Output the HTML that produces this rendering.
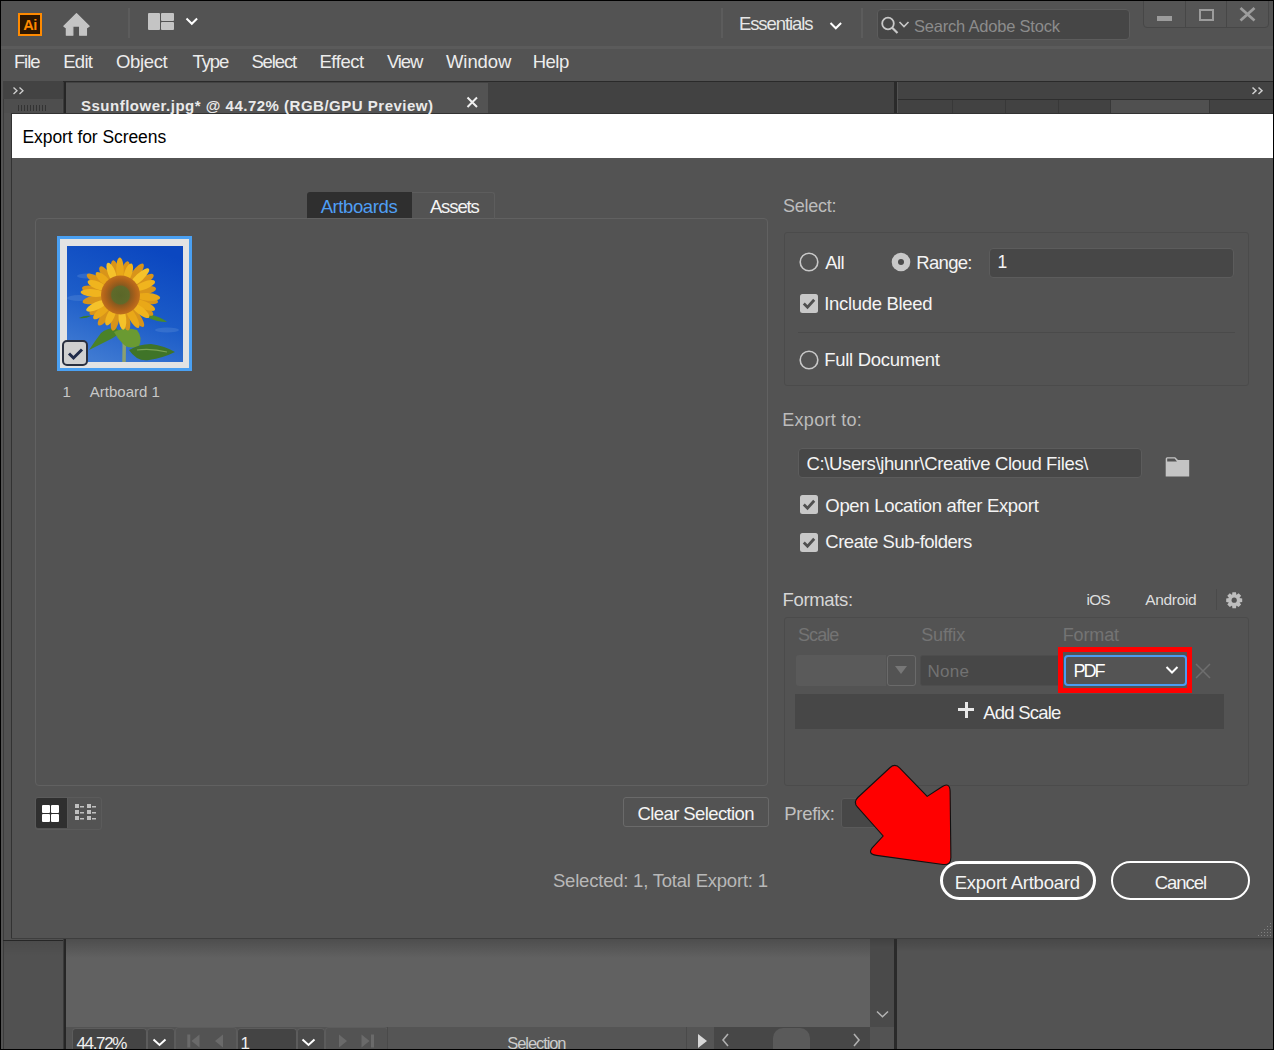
<!DOCTYPE html>
<html><head><meta charset="utf-8"><style>
html,body{margin:0;padding:0;width:1274px;height:1050px;overflow:hidden;background:#000;}
.r{position:absolute;box-sizing:content-box;}
.t{position:absolute;white-space:nowrap;font-family:"Liberation Sans",sans-serif;}
svg.r{overflow:visible}
</style></head><body>
<div class="r" style="left:1px;top:1px;width:1272px;height:1048px;background:#535353;"></div>
<div class="r" style="left:1px;top:46px;width:1272px;height:3px;background:#5b5b5b;"></div>
<div class="r" style="left:18px;top:13px;width:20px;height:19px;background:#2d1600;border:2px solid #ff8a00;"></div>
<svg class="r" style="left:18px;top:13px" width="24" height="23" viewBox="0 0 24 23"><text x="5.3" y="16.8" font-family="Liberation Sans" font-weight="700" font-size="14.5" fill="#ff8a00" letter-spacing="-0.6">Ai</text></svg>
<svg class="r" style="left:60px;top:10.5px" width="32" height="28"><path d="M16.5 2.7 L3.9 15.1 L6.4 16.9 L6.4 24.2 L12.8 24.2 L12.8 15.0 L19.7 15.0 L19.7 24.2 L26.4 24.2 L26.4 16.9 L29.1 15.1 Z" fill="#c4c4c4" stroke="#c4c4c4" stroke-width="1.3" stroke-linejoin="round"/></svg>
<div class="r" style="left:128px;top:8px;width:2px;height:30px;background:#5c5c5c;"></div>
<div class="r" style="left:148px;top:13px;width:12px;height:17px;background:#c4c4c4;border-radius:1px"></div>
<div class="r" style="left:161px;top:13px;width:13px;height:8px;background:#c4c4c4;border-radius:1px"></div>
<div class="r" style="left:161px;top:22px;width:13px;height:8px;background:#c4c4c4;border-radius:1px"></div>
<svg class="r" style="left:184px;top:16px" width="16" height="11"><path d="M2.5 2.5 L7.8 7.8 L13.1 2.5" fill="none" stroke="#ffffff" stroke-width="2"/></svg>
<div class="r" style="left:721px;top:8px;width:2px;height:30px;background:#5c5c5c;"></div>
<svg class="r" style="left:828px;top:20px" width="16" height="12"><path d="M2.5 3 L7.8 8.3 L13.1 3" fill="none" stroke="#ffffff" stroke-width="2"/></svg>
<div class="r" style="left:861px;top:8px;width:2px;height:30px;background:#5c5c5c;"></div>
<div class="r" style="left:877px;top:9px;width:251px;height:29px;background:#464646;border:1px solid #5c5c5c;border-radius:4px"></div>
<svg class="r" style="left:878px;top:14px" width="36" height="22"><circle cx="10" cy="9.5" r="5.8" fill="none" stroke="#c8c8c8" stroke-width="1.8"/><path d="M14.2 13.7 L19.5 19" stroke="#c8c8c8" stroke-width="2.2"/><path d="M21.5 8 L26 12.5 L30.5 8" fill="none" stroke="#c8c8c8" stroke-width="1.6"/></svg>
<div class="r" style="left:1143px;top:-4px;width:124px;height:30px;border:1px solid #474747;border-radius:0 0 4px 4px;background:#555555"></div>
<div class="r" style="left:1185px;top:0px;width:1px;height:27px;background:#474747;"></div>
<div class="r" style="left:1226px;top:0px;width:1px;height:27px;background:#474747;"></div>
<div class="r" style="left:1157px;top:16px;width:15px;height:5px;background:#9c9c9c;"></div>
<div class="r" style="left:1199px;top:9px;width:11px;height:8px;border:2.5px solid #9c9c9c"></div>
<svg class="r" style="left:1239px;top:7px" width="18" height="15"><path d="M1.5 1 L15.5 13.5 M15.5 1 L1.5 13.5" stroke="#9c9c9c" stroke-width="2.8"/></svg>
<div class="r" style="left:63px;top:81px;width:1210px;height:1px;background:#2a2a2a;"></div>
<div class="r" style="left:3px;top:82px;width:60px;height:967px;background:#515151;"></div>
<div class="r" style="left:3px;top:99px;width:1px;height:950px;background:#3c3c3c;"></div>
<div class="r" style="left:4px;top:941px;width:59px;height:15px;background:linear-gradient(rgba(0,0,0,0.08),rgba(0,0,0,0));"></div>
<div class="r" style="left:3px;top:81px;width:60px;height:18px;background:#434343;"></div>
<svg class="r" style="left:12px;top:86px" width="14" height="10"><path d="M1.5 1.5 L5 4.8 L1.5 8 M7.5 1.5 L11 4.8 L7.5 8" fill="none" stroke="#cfcfcf" stroke-width="1.3"/></svg>
<div class="r" style="left:4px;top:99px;width:58px;height:14px;background:#4e4e4e;"></div>
<div class="r" style="left:18px;top:105px;width:1px;height:6px;background:#333333;"></div>
<div class="r" style="left:21px;top:105px;width:1px;height:6px;background:#333333;"></div>
<div class="r" style="left:24px;top:105px;width:1px;height:6px;background:#333333;"></div>
<div class="r" style="left:27px;top:105px;width:1px;height:6px;background:#333333;"></div>
<div class="r" style="left:30px;top:105px;width:1px;height:6px;background:#333333;"></div>
<div class="r" style="left:33px;top:105px;width:1px;height:6px;background:#333333;"></div>
<div class="r" style="left:36px;top:105px;width:1px;height:6px;background:#333333;"></div>
<div class="r" style="left:39px;top:105px;width:1px;height:6px;background:#333333;"></div>
<div class="r" style="left:42px;top:105px;width:1px;height:6px;background:#333333;"></div>
<div class="r" style="left:45px;top:105px;width:1px;height:6px;background:#333333;"></div>
<div class="r" style="left:63px;top:82px;width:1px;height:967px;background:#3a3a3a;"></div>
<div class="r" style="left:64px;top:82px;width:2px;height:967px;background:#262626;"></div>
<div class="r" style="left:66px;top:82px;width:828px;height:31px;background:#424242;"></div>
<div class="r" style="left:66px;top:83px;width:422px;height:30px;background:#535353;"></div>
<svg class="r" style="left:466px;top:96px" width="13" height="13"><path d="M1.5 1.5 L11 11 M11 1.5 L1.5 11" stroke="#f0f0f0" stroke-width="2"/></svg>
<div class="r" style="left:66px;top:113px;width:804px;height:914px;background:#616161;"></div>
<div class="r" style="left:870px;top:113px;width:24px;height:914px;background:#4a4a4a;"></div>
<svg class="r" style="left:874px;top:1009px" width="16" height="12"><path d="M3 2.5 L8.5 7.8 L14 2.5" fill="none" stroke="#b4b4b4" stroke-width="1.5"/></svg>
<div class="r" style="left:894px;top:82px;width:3px;height:967px;background:#2a2a2a;"></div>
<div class="r" style="left:897px;top:82px;width:376px;height:967px;background:#535353;"></div>
<div class="r" style="left:898px;top:82px;width:375px;height:17px;background:#434343;"></div>
<svg class="r" style="left:1251px;top:86px" width="14" height="10"><path d="M1.5 1.5 L5 4.8 L1.5 8 M7.5 1.5 L11 4.8 L7.5 8" fill="none" stroke="#cfcfcf" stroke-width="1.5"/></svg>
<div class="r" style="left:898px;top:99px;width:375px;height:1px;background:#2e2e2e;"></div>
<div class="r" style="left:898px;top:100px;width:375px;height:13px;background:#424242;"></div>
<div class="r" style="left:952px;top:100px;width:1px;height:13px;background:#383838;"></div>
<div class="r" style="left:1005px;top:100px;width:1px;height:13px;background:#383838;"></div>
<div class="r" style="left:1058px;top:100px;width:1px;height:13px;background:#383838;"></div>
<div class="r" style="left:1110px;top:100px;width:1px;height:13px;background:#383838;"></div>
<div class="r" style="left:1209px;top:100px;width:1px;height:13px;background:#383838;"></div>
<div class="r" style="left:1111px;top:100px;width:98px;height:13px;background:#505050;"></div>
<div class="r" style="left:72px;top:1028px;width:73px;height:21px;background:#444444;border:1px solid #5c5c5c;border-bottom:none;border-radius:4px 4px 0 0"></div>
<div class="r" style="left:147px;top:1028px;width:26px;height:21px;background:#4a4a4a;border:1px solid #5c5c5c;border-bottom:none;border-radius:4px 4px 0 0"></div>
<svg class="r" style="left:151px;top:1036px" width="18" height="12"><path d="M2.5 3.5 L8.5 9 L14.5 3.5" fill="none" stroke="#ffffff" stroke-width="2"/></svg>
<div class="r" style="left:175px;top:1027px;width:60px;height:22px;background:#535353;border:1px solid #5c5c5c;border-bottom:none;border-radius:4px 4px 0 0"></div>
<svg class="r" style="left:186px;top:1033px" width="40" height="16"><path d="M2.8 1.5 L2.8 14.5" stroke="#6a6a6a" stroke-width="3"/><path d="M13.5 1.5 L5.5 8 L13.5 14.5 Z M37 1.5 L29 8 L37 14.5 Z" fill="#6a6a6a"/></svg>
<div class="r" style="left:237px;top:1028px;width:58px;height:21px;background:#444444;border:1px solid #5c5c5c;border-bottom:none;border-radius:4px 4px 0 0"></div>
<div class="r" style="left:297px;top:1028px;width:26px;height:21px;background:#4a4a4a;border:1px solid #5c5c5c;border-bottom:none;border-radius:4px 4px 0 0"></div>
<svg class="r" style="left:300px;top:1036px" width="18" height="12"><path d="M2.5 3.5 L8.5 9 L14.5 3.5" fill="none" stroke="#ffffff" stroke-width="2"/></svg>
<div class="r" style="left:325px;top:1027px;width:61px;height:22px;background:#535353;border:1px solid #5c5c5c;border-bottom:none;border-radius:4px 4px 0 0"></div>
<svg class="r" style="left:336px;top:1033px" width="40" height="16"><path d="M3 1.5 L11 8 L3 14.5 Z M25.5 1.5 L33.5 8 L25.5 14.5 Z" fill="#6a6a6a"/><path d="M36.5 1.5 L36.5 14.5" stroke="#6a6a6a" stroke-width="3"/></svg>
<div class="r" style="left:387px;top:1027px;width:327px;height:22px;background:#555555;"></div>
<div class="r" style="left:387px;top:1027px;width:1px;height:22px;background:#4a4a4a;"></div>
<div class="r" style="left:686px;top:1027px;width:1px;height:22px;background:#4a4a4a;"></div>
<svg class="r" style="left:697px;top:1034px" width="12" height="14"><path d="M1 0 L10 7 L1 14 Z" fill="#d8d8d8"/></svg>
<div class="r" style="left:714px;top:1027px;width:156px;height:22px;background:#474747;"></div>
<svg class="r" style="left:718px;top:1032px" width="150" height="16"><path d="M10 2 L5 8 L10 14 M136 2 L141 8 L136 14" fill="none" stroke="#b0b0b0" stroke-width="1.6"/></svg>
<div class="r" style="left:773px;top:1028px;width:37px;height:21px;background:#5a5a5a;border-radius:10px 10px 0 0"></div>
<div class="r" style="left:870px;top:1027px;width:24px;height:22px;background:#535353;"></div>
<div class="r" style="left:66px;top:939px;width:804px;height:19px;background:linear-gradient(rgba(0,0,0,0.2),rgba(0,0,0,0));"></div>
<div class="r" style="left:897px;top:939px;width:376px;height:13px;background:linear-gradient(rgba(0,0,0,0.14),rgba(0,0,0,0));"></div>
<div class="r" style="left:870px;top:939px;width:24px;height:9px;background:linear-gradient(rgba(0,0,0,0.12),rgba(0,0,0,0));"></div>
<div class="r" style="left:3px;top:940px;width:60px;height:1px;background:#262626;"></div>
<div class="r" style="left:11px;top:113px;width:1262px;height:826px;background:#323232;"></div>
<div class="r" style="left:12px;top:114px;width:1261px;height:824px;background:#535353;"></div>
<div class="r" style="left:12px;top:114px;width:1261px;height:44px;background:#ffffff;"></div>
<div class="r" style="left:11px;top:938px;width:1262px;height:1px;background:#3e3e3e;"></div>
<div class="r" style="left:35px;top:218px;width:731px;height:566px;border:1px solid #616161;border-radius:4px"></div>
<div class="r" style="left:307px;top:192px;width:186px;height:26px;border:1px solid #5d5d5d;border-bottom:none;border-radius:3px 3px 0 0"></div>
<div class="r" style="left:307px;top:192px;width:105px;height:26px;background:#2f2f2f;border-radius:3px 0 0 0"></div>
<div class="r" style="left:57px;top:236px;width:135px;height:135px;background:#4aa0f2;"></div>
<div class="r" style="left:60px;top:239px;width:129px;height:129px;background:#e3e3e3;"></div>
<svg class="r" style="left:67px;top:246px" width="116" height="116" viewBox="0 0 116 116"><defs><linearGradient id="sky" x1="0.7" y1="0" x2="0.3" y2="1"><stop offset="0" stop-color="#0b47c0"/><stop offset="0.55" stop-color="#1c5cc8"/><stop offset="1" stop-color="#3f7ad2"/></linearGradient><radialGradient id="ctr"><stop offset="0" stop-color="#5a6628"/><stop offset="0.45" stop-color="#5f6a2a"/><stop offset="0.52" stop-color="#8a5a1e"/><stop offset="0.8" stop-color="#b0621a"/><stop offset="1" stop-color="#c0701c"/></radialGradient></defs><rect width="116" height="116" fill="url(#sky)"/><g fill="#5d8fd8" opacity="0.35"><ellipse cx="12" cy="52" rx="12" ry="3"/><ellipse cx="20" cy="30" rx="10" ry="2.5"/><ellipse cx="100" cy="84" rx="12" ry="2.5"/></g><path d="M57 84 Q57.5 100 57 116" stroke="#8aa070" stroke-width="3.5" fill="none"/><path d="M49 82 Q40 82 34 87 Q28 95 22 104 Q34 98 42 94 Q50 90 53 86Z" fill="#4a8228"/><path d="M47 86 Q58 80 70 84 Q76 92 72 100 Q62 104 56 98 Q50 92 47 86Z" fill="#6a9a32"/><path d="M62 104 Q72 98 84 98 Q98 100 108 106 Q96 112 82 114 Q70 116 62 104Z" fill="#3f7428"/><path d="M70 104 Q84 102 100 106" stroke="#7aa454" stroke-width="1.2" fill="none"/><path d="M82 68 Q94 71 100 76 Q90 76 82 72Z" fill="#4a8a2a"/><path d="M12 72 Q18 69 24 70 Q18 73 12 72Z" fill="#3a7a2a"/><ellipse cx="79.6" cy="53.8" rx="11.6" ry="4.0" transform="rotate(10.4 79.6 53.8)" fill="#d8941a"/><ellipse cx="75.9" cy="62.7" rx="11.9" ry="4.0" transform="rotate(31.6 75.9 62.7)" fill="#d8941a"/><ellipse cx="69.0" cy="70.3" rx="12.8" ry="4.0" transform="rotate(54.0 69.0 70.3)" fill="#d8941a"/><ellipse cx="58.7" cy="73.1" rx="11.7" ry="4.0" transform="rotate(77.8 58.7 73.1)" fill="#d8941a"/><ellipse cx="48.3" cy="73.2" rx="11.8" ry="4.0" transform="rotate(102.2 48.3 73.2)" fill="#d8941a"/><ellipse cx="38.5" cy="69.6" rx="12.0" ry="4.0" transform="rotate(126.0 38.5 69.6)" fill="#d8941a"/><ellipse cx="31.9" cy="62.3" rx="11.0" ry="4.0" transform="rotate(148.4 31.9 62.3)" fill="#d8941a"/><ellipse cx="27.2" cy="53.8" rx="11.8" ry="4.0" transform="rotate(169.6 27.2 53.8)" fill="#d8941a"/><ellipse cx="26.9" cy="44.1" rx="12.1" ry="4.0" transform="rotate(-169.6 26.9 44.1)" fill="#d8941a"/><ellipse cx="30.6" cy="35.0" rx="12.5" ry="4.0" transform="rotate(-148.4 30.6 35.0)" fill="#d8941a"/><ellipse cx="39.2" cy="29.3" rx="10.7" ry="4.0" transform="rotate(-126.0 39.2 29.3)" fill="#d8941a"/><ellipse cx="48.4" cy="25.3" rx="11.3" ry="4.0" transform="rotate(-102.2 48.4 25.3)" fill="#d8941a"/><ellipse cx="58.5" cy="25.8" rx="10.7" ry="4.0" transform="rotate(-77.8 58.5 25.8)" fill="#d8941a"/><ellipse cx="68.8" cy="27.9" rx="12.5" ry="4.0" transform="rotate(-54.0 68.8 27.9)" fill="#d8941a"/><ellipse cx="76.1" cy="35.1" rx="12.2" ry="4.0" transform="rotate(-31.6 76.1 35.1)" fill="#d8941a"/><ellipse cx="78.6" cy="44.4" rx="10.6" ry="4.0" transform="rotate(-10.4 78.6 44.4)" fill="#d8941a"/><ellipse cx="80.8" cy="50.9" rx="12.4" ry="3.8" transform="rotate(4.1 80.8 50.9)" fill="#e9a818"/><ellipse cx="77.5" cy="59.2" rx="11.5" ry="3.8" transform="rotate(22.9 77.5 59.2)" fill="#e9a818"/><ellipse cx="73.3" cy="64.6" rx="11.1" ry="3.8" transform="rotate(38.2 73.3 64.6)" fill="#f0b41e"/><ellipse cx="65.7" cy="71.3" rx="12.1" ry="3.8" transform="rotate(61.3 65.7 71.3)" fill="#e9a818"/><ellipse cx="55.4" cy="72.8" rx="10.9" ry="3.8" transform="rotate(85.3 55.4 72.8)" fill="#f5c22a"/><ellipse cx="43.6" cy="70.2" rx="10.1" ry="3.8" transform="rotate(115.1 43.6 70.2)" fill="#f0b41e"/><ellipse cx="34.7" cy="65.5" rx="11.0" ry="3.8" transform="rotate(138.7 34.7 65.5)" fill="#e9a818"/><ellipse cx="29.8" cy="59.8" rx="11.5" ry="3.8" transform="rotate(155.5 29.8 59.8)" fill="#f5c22a"/><ellipse cx="26.1" cy="47.0" rx="12.5" ry="3.8" transform="rotate(-175.8 26.1 47.0)" fill="#f0b41e"/><ellipse cx="30.3" cy="39.3" rx="10.4" ry="3.8" transform="rotate(-157.3 30.3 39.3)" fill="#f0b41e"/><ellipse cx="36.1" cy="33.0" rx="9.6" ry="3.8" transform="rotate(-137.3 36.1 33.0)" fill="#e9a818"/><ellipse cx="44.7" cy="26.8" rx="10.7" ry="3.8" transform="rotate(-111.6 44.7 26.8)" fill="#f5c22a"/><ellipse cx="53.0" cy="23.8" rx="12.4" ry="3.8" transform="rotate(-91.1 53.0 23.8)" fill="#e9a818"/><ellipse cx="61.2" cy="27.0" rx="10.1" ry="3.8" transform="rotate(-70.6 61.2 27.0)" fill="#f0b41e"/><ellipse cx="72.8" cy="31.1" rx="12.4" ry="3.8" transform="rotate(-42.9 72.8 31.1)" fill="#f5c22a"/><ellipse cx="77.6" cy="39.5" rx="11.2" ry="3.8" transform="rotate(-21.6 77.6 39.5)" fill="#f0b41e"/><circle cx="53.5" cy="49" r="19.5" fill="url(#ctr)"/></svg>
<div class="r" style="left:62px;top:340px;width:21.5px;height:21.5px;background:#d0d0d0;border:2.5px solid #2a3040;border-radius:5px"></div>
<svg class="r" style="left:62px;top:340px" width="27" height="27"><path d="M7 13.5 L11.5 18 L20 9.5" fill="none" stroke="#1f2b4a" stroke-width="3"/></svg>
<div class="r" style="left:35px;top:797px;width:65px;height:31px;border:1px solid #5b5b5b;border-radius:3px"></div>
<div class="r" style="left:36px;top:798px;width:31px;height:30px;background:#2f2f2f;border-radius:2px 0 0 2px"></div>
<div class="r" style="left:67px;top:798px;width:1px;height:30px;background:#5a5a5a;"></div>
<div class="r" style="left:42px;top:805px;width:8px;height:8px;background:#ffffff;border-radius:1px"></div>
<div class="r" style="left:51px;top:805px;width:8px;height:8px;background:#ffffff;border-radius:1px"></div>
<div class="r" style="left:42px;top:814px;width:8px;height:8px;background:#ffffff;border-radius:1px"></div>
<div class="r" style="left:51px;top:814px;width:8px;height:8px;background:#ffffff;border-radius:1px"></div>
<svg class="r" style="left:74px;top:803px" width="24" height="20"><rect x="1" y="1" width="4" height="4" fill="#c0c0c0"/><rect x="1" y="7" width="4" height="4" fill="#c0c0c0"/><rect x="1" y="13" width="4" height="4" fill="#c0c0c0"/><rect x="13" y="1" width="4" height="4" fill="#c0c0c0"/><rect x="13" y="7" width="4" height="4" fill="#c0c0c0"/><rect x="13" y="13" width="4" height="4" fill="#c0c0c0"/><rect x="6" y="3" width="4" height="1.5" fill="#c0c0c0"/><rect x="6" y="9" width="4" height="1.5" fill="#c0c0c0"/><rect x="6" y="15" width="4" height="1.5" fill="#c0c0c0"/><rect x="18" y="3" width="4" height="1.5" fill="#c0c0c0"/><rect x="18" y="9" width="4" height="1.5" fill="#c0c0c0"/><rect x="18" y="15" width="4" height="1.5" fill="#c0c0c0"/></svg>
<div class="r" style="left:623px;top:797px;width:144px;height:28px;border:1px solid #6a6a6a;border-radius:3px"></div>
<div class="r" style="left:784px;top:232px;width:463px;height:152px;border:1px solid #4b4b4b;border-radius:3px"></div>
<svg class="r" style="left:799px;top:252px" width="20" height="20"><circle cx="10" cy="10" r="8.8" fill="none" stroke="#c8c8c8" stroke-width="1.6"/></svg>
<svg class="r" style="left:891px;top:252px" width="20" height="20"><circle cx="10" cy="10" r="9.3" fill="#c8c8c8"/><circle cx="10" cy="10" r="3" fill="#4a4a4a"/></svg>
<div class="r" style="left:989px;top:248px;width:243px;height:28px;background:#474747;border:1px solid #5c5c5c;border-radius:4px"></div>
<div class="r" style="left:799.5px;top:294px;width:18px;height:19px;background:#c8c8c8;border-radius:2.5px"></div><svg class="r" style="left:799.5px;top:294px" width="18" height="19"><path d="M3.8 9.5 L7.5 13.2 L14.2 5.8" fill="none" stroke="#505050" stroke-width="2.8"/></svg>
<div class="r" style="left:798px;top:332px;width:437px;height:1px;background:#4a4a4a;"></div>
<svg class="r" style="left:799px;top:350px" width="20" height="20"><circle cx="10" cy="10" r="8.8" fill="none" stroke="#c8c8c8" stroke-width="1.6"/></svg>
<div class="r" style="left:798px;top:448px;width:342px;height:28px;background:#474747;border:1px solid #5c5c5c;border-radius:4px"></div>
<svg class="r" style="left:1164px;top:456px" width="28" height="22"><path d="M1.7 2.7 Q1.7 1.2 3.2 1.2 L11.2 1.2 L14 4 L25.2 4 L25.2 20.4 L1.7 20.4 Z" fill="#c4c4c4"/><path d="M3.2 2.6 L10.6 2.6 L13 5.4 L3.2 5.4 Z" fill="#535353"/></svg>
<div class="r" style="left:799.5px;top:495px;width:18px;height:19px;background:#c8c8c8;border-radius:2.5px"></div><svg class="r" style="left:799.5px;top:495px" width="18" height="19"><path d="M3.8 9.5 L7.5 13.2 L14.2 5.8" fill="none" stroke="#505050" stroke-width="2.8"/></svg>
<div class="r" style="left:799.5px;top:533px;width:18px;height:19px;background:#c8c8c8;border-radius:2.5px"></div><svg class="r" style="left:799.5px;top:533px" width="18" height="19"><path d="M3.8 9.5 L7.5 13.2 L14.2 5.8" fill="none" stroke="#505050" stroke-width="2.8"/></svg>
<div class="r" style="left:1216px;top:589px;width:1px;height:21px;background:#4a4a4a;"></div>
<svg class="r" style="left:1226px;top:592px" width="17" height="17"><path d="M16.20 6.41 L16.20 9.99 L13.36 10.38 L13.39 10.31 L15.12 12.59 L12.59 15.12 L10.31 13.39 L10.38 13.36 L9.99 16.20 L6.41 16.20 L6.02 13.36 L6.09 13.39 L3.81 15.12 L1.28 12.59 L3.01 10.31 L3.04 10.38 L0.20 9.99 L0.20 6.41 L3.04 6.02 L3.01 6.09 L1.28 3.81 L3.81 1.28 L6.09 3.01 L6.02 3.04 L6.41 0.20 L9.99 0.20 L10.38 3.04 L10.31 3.01 L12.59 1.28 L15.12 3.81 L13.39 6.09 L13.36 6.02Z" fill="#bebebe"/><circle cx="8.2" cy="8.2" r="2.6" fill="#535353"/></svg>
<div class="r" style="left:784px;top:617px;width:463px;height:167px;border:1px solid #4b4b4b;border-radius:3px"></div>
<div class="r" style="left:796px;top:655px;width:90px;height:31px;background:#5a5a5a;border-radius:3px 0 0 3px"></div>
<div class="r" style="left:887px;top:655px;width:27px;height:29px;border:1px solid #6a6a6a;border-radius:3px"></div>
<svg class="r" style="left:894px;top:665px" width="14" height="10"><path d="M1 1 L13 1 L7 9Z" fill="#777777"/></svg>
<div class="r" style="left:920px;top:655px;width:140px;height:29px;background:#474747;border:1px solid #4d4d4d;border-radius:3px 0 0 3px"></div>
<div class="r" style="left:1058px;top:647px;width:124px;height:36px;border:5px solid #ff0000;background:#535353"></div>
<div class="r" style="left:1064px;top:655px;width:119px;height:27px;border:2px solid #4a9cf2;border-radius:4px;background:#545454"></div>
<svg class="r" style="left:1164px;top:664px" width="16" height="12"><path d="M2.5 3 L8 8.5 L13.5 3" fill="none" stroke="#ffffff" stroke-width="2"/></svg>
<svg class="r" style="left:1194px;top:662px" width="18" height="18"><path d="M2 2 L16 16 M16 2 L2 16" stroke="#6e6e6e" stroke-width="1.5"/></svg>
<div class="r" style="left:795px;top:694px;width:429px;height:35px;background:#474747;"></div>
<div class="r" style="left:958px;top:708px;width:16px;height:3px;background:#e8e8e8;"></div>
<div class="r" style="left:965px;top:702px;width:3px;height:16px;background:#e8e8e8;"></div>
<div class="r" style="left:841px;top:798px;width:60px;height:28px;background:#474747;border:1px solid #5a5a5a;border-radius:3px"></div>
<div class="r" style="left:940px;top:861px;width:150px;height:33px;border:3px solid #ffffff;border-radius:20px"></div>
<div class="r" style="left:1111px;top:861px;width:135px;height:35px;border:2px solid #ffffff;border-radius:20px"></div>
<div class="r" style="left:1270px;top:923px;width:1px;height:1px;background:#808080;"></div>
<div class="r" style="left:1270px;top:926px;width:1px;height:1px;background:#808080;"></div>
<div class="r" style="left:1267px;top:926px;width:1px;height:1px;background:#808080;"></div>
<div class="r" style="left:1270px;top:929px;width:1px;height:1px;background:#808080;"></div>
<div class="r" style="left:1267px;top:929px;width:1px;height:1px;background:#808080;"></div>
<div class="r" style="left:1264px;top:929px;width:1px;height:1px;background:#808080;"></div>
<div class="r" style="left:1270px;top:932px;width:1px;height:1px;background:#808080;"></div>
<div class="r" style="left:1267px;top:932px;width:1px;height:1px;background:#808080;"></div>
<div class="r" style="left:1264px;top:932px;width:1px;height:1px;background:#808080;"></div>
<div class="r" style="left:1261px;top:932px;width:1px;height:1px;background:#808080;"></div>
<div class="r" style="left:1270px;top:935px;width:1px;height:1px;background:#808080;"></div>
<div class="r" style="left:1267px;top:935px;width:1px;height:1px;background:#808080;"></div>
<div class="r" style="left:1264px;top:935px;width:1px;height:1px;background:#808080;"></div>
<div class="r" style="left:1261px;top:935px;width:1px;height:1px;background:#808080;"></div>
<div class="r" style="left:1258px;top:935px;width:1px;height:1px;background:#808080;"></div>
<div class="t" style="left:738.90px;top:15.14px;font-size:18.5px;line-height:18.5px;color:#e6e6e6;font-weight:400;letter-spacing:-1.074px;">Essentials</div>
<div class="t" style="left:914.00px;top:17.63px;font-size:16.5px;line-height:16.5px;color:#8c8c8c;font-weight:400;letter-spacing:-0.210px;">Search Adobe Stock</div>
<div class="t" style="left:13.90px;top:53.04px;font-size:18.5px;line-height:18.5px;color:#ececec;font-weight:400;letter-spacing:-1.074px;">File</div>
<div class="t" style="left:63.20px;top:53.04px;font-size:18.5px;line-height:18.5px;color:#ececec;font-weight:400;letter-spacing:-0.713px;">Edit</div>
<div class="t" style="left:116.00px;top:53.04px;font-size:18.5px;line-height:18.5px;color:#ececec;font-weight:400;letter-spacing:-0.346px;">Object</div>
<div class="t" style="left:192.60px;top:53.04px;font-size:18.5px;line-height:18.5px;color:#ececec;font-weight:400;letter-spacing:-1.140px;">Type</div>
<div class="t" style="left:251.40px;top:53.04px;font-size:18.5px;line-height:18.5px;color:#ececec;font-weight:400;letter-spacing:-1.135px;">Select</div>
<div class="t" style="left:319.50px;top:53.04px;font-size:18.5px;line-height:18.5px;color:#ececec;font-weight:400;letter-spacing:-0.465px;">Effect</div>
<div class="t" style="left:386.90px;top:53.04px;font-size:18.5px;line-height:18.5px;color:#ececec;font-weight:400;letter-spacing:-1.135px;">View</div>
<div class="t" style="left:446.00px;top:53.04px;font-size:18.5px;line-height:18.5px;color:#ececec;font-weight:400;letter-spacing:-0.088px;">Window</div>
<div class="t" style="left:532.70px;top:53.04px;font-size:18.5px;line-height:18.5px;color:#ececec;font-weight:400;letter-spacing:-0.486px;">Help</div>
<div class="t" style="left:81.00px;top:98.00px;font-size:15px;line-height:15px;color:#eaeaea;font-weight:700;letter-spacing:0.503px;">Ssunflower.jpg* @ 44.72% (RGB/GPU Preview)</div>
<div class="t" style="left:76.50px;top:1035.31px;font-size:17px;line-height:17px;color:#f0f0f0;font-weight:400;letter-spacing:-1.348px;">44.72%</div>
<div class="t" style="left:240.50px;top:1035.31px;font-size:17px;line-height:17px;color:#f0f0f0;font-weight:400;letter-spacing:0.000px;">1</div>
<div class="t" style="left:507.30px;top:1034.53px;font-size:16.5px;line-height:16.5px;color:#cccccc;font-weight:400;letter-spacing:-1.088px;">Selection</div>
<div class="t" style="left:22.50px;top:128.69px;font-size:17.5px;line-height:17.5px;color:#000000;font-weight:400;letter-spacing:-0.075px;">Export for Screens</div>
<div class="t" style="left:320.70px;top:197.64px;font-size:18.5px;line-height:18.5px;color:#4f9ff5;font-weight:400;letter-spacing:-0.407px;">Artboards</div>
<div class="t" style="left:429.90px;top:197.64px;font-size:18.5px;line-height:18.5px;color:#f4f4f4;font-weight:400;letter-spacing:-1.114px;">Assets</div>
<div class="t" style="left:62.50px;top:384.30px;font-size:15px;line-height:15px;color:#c8c8c8;font-weight:400;letter-spacing:0.000px;">1</div>
<div class="t" style="left:89.80px;top:384.30px;font-size:15px;line-height:15px;color:#c8c8c8;font-weight:400;letter-spacing:0.000px;">Artboard 1</div>
<div class="t" style="left:637.60px;top:805.04px;font-size:18.5px;line-height:18.5px;color:#f4f4f4;font-weight:400;letter-spacing:-0.605px;">Clear Selection</div>
<div class="t" style="left:553.00px;top:871.54px;font-size:18.5px;line-height:18.5px;color:#b8b8b8;font-weight:400;letter-spacing:-0.215px;">Selected: 1, Total Export: 1</div>
<div class="t" style="left:783.10px;top:197.36px;font-size:18px;line-height:18px;color:#bcbcbc;font-weight:400;letter-spacing:-0.255px;">Select:</div>
<div class="t" style="left:825.20px;top:253.94px;font-size:18.5px;line-height:18.5px;color:#f4f4f4;font-weight:400;letter-spacing:-0.525px;">All</div>
<div class="t" style="left:916.30px;top:253.94px;font-size:18.5px;line-height:18.5px;color:#f4f4f4;font-weight:400;letter-spacing:-0.703px;">Range:</div>
<div class="t" style="left:997.60px;top:254.49px;font-size:17.5px;line-height:17.5px;color:#f4f4f4;font-weight:400;letter-spacing:0.000px;">1</div>
<div class="t" style="left:824.20px;top:295.44px;font-size:18.5px;line-height:18.5px;color:#f4f4f4;font-weight:400;letter-spacing:-0.319px;">Include Bleed</div>
<div class="t" style="left:824.20px;top:350.84px;font-size:18.5px;line-height:18.5px;color:#f4f4f4;font-weight:400;letter-spacing:-0.294px;">Full Document</div>
<div class="t" style="left:782.30px;top:411.16px;font-size:18px;line-height:18px;color:#bcbcbc;font-weight:400;letter-spacing:0.274px;">Export to:</div>
<div class="t" style="left:806.50px;top:454.74px;font-size:18.5px;line-height:18.5px;color:#f4f4f4;font-weight:400;letter-spacing:-0.375px;">C:\Users\jhunr\Creative Cloud Files\</div>
<div class="t" style="left:825.30px;top:496.84px;font-size:18.5px;line-height:18.5px;color:#f4f4f4;font-weight:400;letter-spacing:-0.303px;">Open Location after Export</div>
<div class="t" style="left:825.30px;top:533.34px;font-size:18.5px;line-height:18.5px;color:#f4f4f4;font-weight:400;letter-spacing:-0.490px;">Create Sub-folders</div>
<div class="t" style="left:782.50px;top:590.94px;font-size:18.5px;line-height:18.5px;color:#d6d6d6;font-weight:400;letter-spacing:-0.334px;">Formats:</div>
<div class="t" style="left:1086.60px;top:592.28px;font-size:15.5px;line-height:15.5px;color:#dedede;font-weight:400;letter-spacing:-0.900px;">iOS</div>
<div class="t" style="left:1145.30px;top:592.28px;font-size:15.5px;line-height:15.5px;color:#dedede;font-weight:400;letter-spacing:-0.351px;">Android</div>
<div class="t" style="left:798.00px;top:625.96px;font-size:18px;line-height:18px;color:#747474;font-weight:400;letter-spacing:-0.929px;">Scale</div>
<div class="t" style="left:921.20px;top:625.96px;font-size:18px;line-height:18px;color:#747474;font-weight:400;letter-spacing:-0.138px;">Suffix</div>
<div class="t" style="left:1062.70px;top:625.96px;font-size:18px;line-height:18px;color:#747474;font-weight:400;letter-spacing:-0.121px;">Format</div>
<div class="t" style="left:927.40px;top:662.81px;font-size:17px;line-height:17px;color:#727272;font-weight:400;letter-spacing:0.271px;">None</div>
<div class="t" style="left:1073.60px;top:661.96px;font-size:18px;line-height:18px;color:#ffffff;font-weight:400;letter-spacing:-2.002px;">PDF</div>
<div class="t" style="left:983.30px;top:703.84px;font-size:18.5px;line-height:18.5px;color:#f4f4f4;font-weight:400;letter-spacing:-0.781px;">Add Scale</div>
<div class="t" style="left:784.30px;top:805.04px;font-size:18.5px;line-height:18.5px;color:#c0c0c0;font-weight:400;letter-spacing:-0.298px;">Prefix:</div>
<div class="t" style="left:954.70px;top:874.24px;font-size:18.5px;line-height:18.5px;color:#f4f4f4;font-weight:400;letter-spacing:-0.234px;">Export Artboard</div>
<div class="t" style="left:1154.70px;top:874.24px;font-size:18.5px;line-height:18.5px;color:#f4f4f4;font-weight:400;letter-spacing:-1.035px;">Cancel</div>
<svg style="position:absolute;left:0;top:0" width="1274" height="1050"><path d="M889.86 767.76 Q895.00 763.00 899.86 768.04 L927.20 796.40 L941.63 786.97 Q950.00 781.50 950.12 791.50 L950.90 857.50 Q951.00 865.50 943.07 864.42 L876.41 855.35 Q866.50 854.00 873.30 846.67 L883.20 836.00 L857.56 807.23 Q852.90 802.00 858.04 797.24Z" fill="#ff0000" stroke="#111" stroke-width="1.1" stroke-linejoin="round"/></svg>
<div style="position:absolute;left:0;top:1049px;width:1274px;height:1px;background:#000"></div><div style="position:absolute;left:0;top:0;width:1274px;height:1px;background:#000"></div><div style="position:absolute;left:0;top:0;width:1px;height:1050px;background:#000"></div><div style="position:absolute;left:1273px;top:0;width:1px;height:1050px;background:#000"></div>
</body></html>
